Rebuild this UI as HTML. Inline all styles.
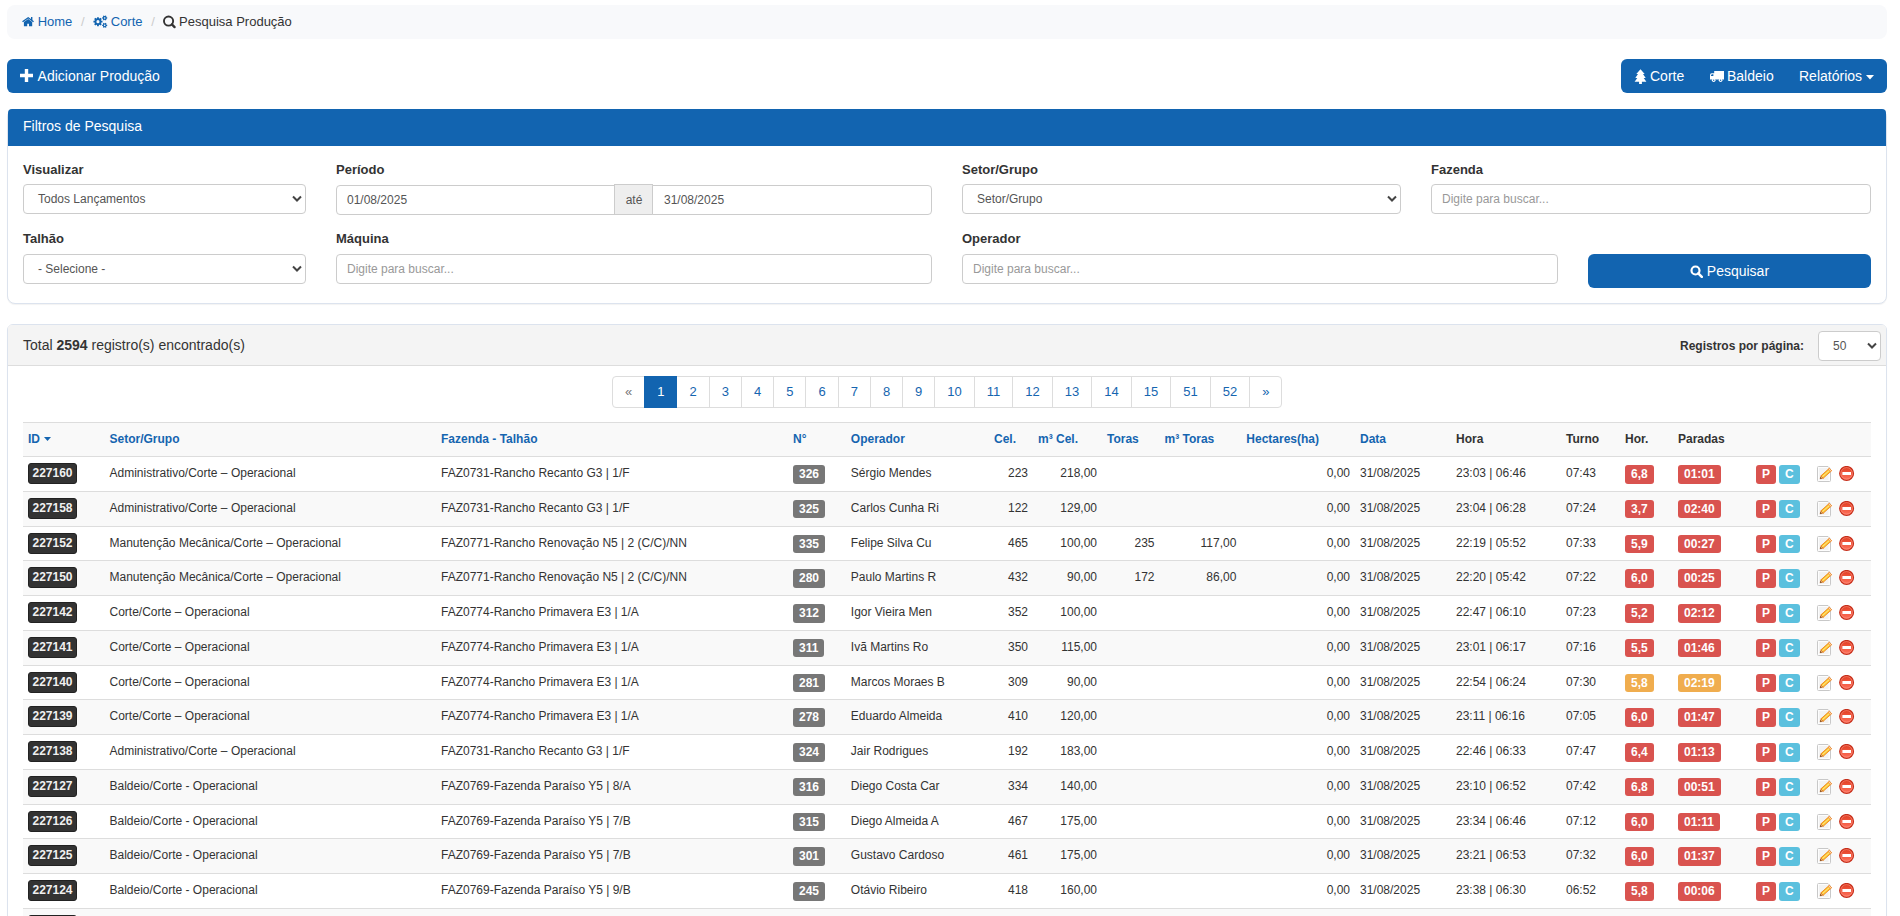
<!DOCTYPE html>
<html><head><meta charset="utf-8">
<style>
*{box-sizing:border-box}
html,body{margin:0;padding:0;background:#fff;width:1900px;height:916px;overflow:hidden}
body{font-family:"Liberation Sans",sans-serif;color:#333;font-size:13px;position:relative}
.abs{position:absolute}
.blue{background:#1264b0}
.bc{left:7px;top:5px;width:1880px;height:34px;background:#f8f9fb;border-radius:8px;font-size:13px;line-height:18px;padding:7px 15px;white-space:nowrap}
.bc a{color:#1264b0;text-decoration:none}
.bc .sep{color:#ccc;padding:0 5px}
.ico{display:inline-block;vertical-align:baseline}
.btn{color:#fff;font-size:14px;line-height:20px;border-radius:6px;white-space:nowrap}
.panel{border:1px solid #dce3ee;border-radius:8px;background:#fff;box-shadow:0 1px 1px rgba(0,0,0,.05)}
.ph1{left:0;top:-1px;right:0;height:37px;border-radius:4px 4px 0 0;color:#fff;font-size:14px;padding:0 15px;line-height:35px}
label{position:absolute;font-weight:bold;font-size:13px;line-height:18px;color:#333}
.fc{position:absolute;height:30px;border:1px solid #ccc;border-radius:4px;background:#fff;font-size:12px;line-height:28px;color:#555;padding:0 10px;white-space:nowrap}
.ph{color:#999}
.chev{position:absolute;right:3px;top:10px}
.pag{display:flex;height:31.5px;font-size:13px}
.pi{display:block;height:31.5px;line-height:29.5px;padding:0 12px;border:1px solid #ddd;margin-left:-1px;color:#1565b0;background:#fff}
.pi.first{margin-left:0;border-radius:4px 0 0 4px}
.pi.last{border-radius:0 4px 4px 0}
.pi.dis{color:#777}
.pi.act{background:#1264b0;border-color:#1264b0;color:#fff;position:relative}
.tbl{font-size:12px}
.thr{position:relative;height:35px;background:#f9f9f9;border-top:1px solid #ddd;border-bottom:1px solid #ddd}
.th{position:absolute;top:7px;line-height:18px;font-weight:bold;color:#333;white-space:nowrap}
.th.lk{color:#1565b0}
.tr{position:relative;height:34.75px;border-bottom:1px solid #ddd;background:#fff}
.tr.st{background:#f9f9f9}
.td{position:absolute;top:7px;line-height:18px;white-space:nowrap;color:#333}
.lb{position:absolute;top:8px;height:18.5px;line-height:18.5px;font-size:12px;font-weight:bold;color:#fff;border-radius:3px;padding:0 6px;white-space:nowrap}
.lid{top:6px;height:21px;line-height:19.5px;background:#333;border:1px solid #222;padding:0 3.5px;border-radius:3px;color:#f0f0f0}
.lnum{background:#777}
.lr{background:#d9534f}
.lo{background:#f0ad4e}
.li{background:#5bc0de}
.icn{position:absolute;top:9px;line-height:0}
</style></head><body>

<!-- breadcrumb -->
<div class="abs bc">
<a href="#"><svg class="ico" width="12.07" height="16" viewBox="0 0 12.07 16" style="vertical-align:-2px;overflow:visible"><path d="M0.1 9.3 L6.2 4.9 L12 9.3 L11.1 10.2 L6.2 6.6 L1 10.2 Z" fill="#1264b0"/><rect x="9" y="5" width="1.4" height="3.2" fill="#1264b0"/><path d="M1.9 10 L6.2 7 L10.2 10 V14.16 H7 V11.8 H5.2 V14.16 H1.9 Z" fill="#1264b0"/></svg> Home</a> <span class="sep">/&nbsp;</span><a href="#"><svg class="ico" width="13.93" height="16" viewBox="0 0 13.93 16" style="vertical-align:-2px;overflow:visible"><path fill-rule="evenodd" fill="#1264b0" d="M8.32 8.70 L9.48 8.82 L9.48 10.50 L8.32 10.62 L8.02 11.36 L8.75 12.26 L7.56 13.45 L6.66 12.72 L5.92 13.02 L5.80 14.18 L4.12 14.18 L4.00 13.02 L3.26 12.72 L2.36 13.45 L1.17 12.26 L1.90 11.36 L1.60 10.62 L0.44 10.50 L0.44 8.82 L1.60 8.70 L1.90 7.96 L1.17 7.06 L2.36 5.87 L3.26 6.60 L4.00 6.30 L4.12 5.14 L5.80 5.14 L5.92 6.30 L6.66 6.60 L7.56 5.87 L8.75 7.06 L8.02 7.96 Z M6.51 9.66 A1.55 1.55 0 1 0 3.41 9.66 A1.55 1.55 0 1 0 6.51 9.66 Z M13.47 5.27 L14.22 5.33 L14.22 6.59 L13.47 6.65 L13.18 7.15 L13.51 7.83 L12.41 8.46 L11.99 7.84 L11.41 7.84 L10.99 8.46 L9.89 7.83 L10.22 7.15 L9.93 6.65 L9.18 6.59 L9.18 5.33 L9.93 5.27 L10.22 4.77 L9.89 4.09 L10.99 3.46 L11.41 4.08 L11.99 4.08 L12.41 3.46 L13.51 4.09 L13.18 4.77 Z M12.50 5.96 A0.8 0.8 0 1 0 10.90 5.96 A0.8 0.8 0 1 0 12.50 5.96 Z M13.47 12.67 L14.22 12.73 L14.22 13.99 L13.47 14.05 L13.18 14.55 L13.51 15.23 L12.41 15.86 L11.99 15.24 L11.41 15.24 L10.99 15.86 L9.89 15.23 L10.22 14.55 L9.93 14.05 L9.18 13.99 L9.18 12.73 L9.93 12.67 L10.22 12.17 L9.89 11.49 L10.99 10.86 L11.41 11.48 L11.99 11.48 L12.41 10.86 L13.51 11.49 L13.18 12.17 Z M12.50 13.36 A0.8 0.8 0 1 0 10.90 13.36 A0.8 0.8 0 1 0 12.50 13.36 Z"/></svg> Corte</a> <span class="sep">/&nbsp;</span><svg class="ico" width="12.07" height="16" viewBox="0 0 12.07 16" style="vertical-align:-2px;overflow:visible"><circle cx="5.56" cy="9.06" r="4.6" fill="none" stroke="#333" stroke-width="1.9"/><path d="M8.9 12.4 L11.6 15.1" stroke="#333" stroke-width="2.3" stroke-linecap="round"/></svg> Pesquisa Produção
</div>

<!-- buttons -->
<div class="abs btn blue" style="left:7px;top:59px;width:165px;height:34px;padding:7px 0 0 13px">
<svg class="ico" width="13" height="13" viewBox="0 0 13 13" style="vertical-align:-1px;margin-right:1.5px"><path d="M4.8 0 H8.2 V4.8 H13 V8.2 H8.2 V13 H4.8 V8.2 H0 V4.8 H4.8 Z" fill="#fff"/></svg> Adicionar Produção</div>

<div class="abs btn blue" style="left:1621px;top:59px;width:266px;height:34px">
<svg class="abs" style="left:13px;top:10px" width="13" height="16" viewBox="0 0 13 16"><path d="M6.5 0.3 L10.7 5 H9 L11.7 8.9 H9.7 L12.4 12.8 H7.9 V14.9 H5.1 V12.8 H0.6 L3.3 8.9 H1.3 L4 5 H2.3 Z" fill="#fff"/></svg>
<span class="abs" style="left:29px;top:7px">Corte</span>
<svg class="abs" style="left:89px;top:12px" width="15" height="12" viewBox="0 0 15 12"><path d="M4.2 0 H14 V8.6 H4.2 Z M0 4.2 Q0 2.3 1.6 2.3 H4.4 V8.6 H0 Z" fill="#fff"/><path d="M0.9 5 Q0.9 3.2 2.2 3.2 H3.4 V5 Z" fill="#1264b0"/><circle cx="3.7" cy="9.3" r="1.8" fill="#fff"/><circle cx="10.6" cy="9.3" r="1.8" fill="#fff"/><circle cx="3.7" cy="9.3" r="0.7" fill="#1264b0"/><circle cx="10.6" cy="9.3" r="0.7" fill="#1264b0"/></svg>
<span class="abs" style="left:106px;top:7px">Baldeio</span>
<span class="abs" style="left:178px;top:7px">Relatórios <svg class="ico" width="8" height="5" viewBox="0 0 8 5" style="vertical-align:1px"><path d="M0 0 H8 L4 4.5 Z" fill="#fff"/></svg></span>
</div>

<!-- filter panel -->
<div class="abs panel" style="left:7px;top:109px;width:1880px;height:195px">
 <div class="abs ph1 blue">Filtros de Pesquisa</div>
 <label style="left:15px;top:51px">Visualizar</label>
 <div class="fc" style="left:15px;top:74px;width:283px;padding-left:14px">Todos Lançamentos<svg class="chev" width="10" height="8" viewBox="0 0 10 8"><path d="M1 1.5 L5 5.5 L9 1.5" fill="none" stroke="#444" stroke-width="2"/></svg></div>
 <label style="left:328px;top:51px">Período</label>
 <div class="fc" style="left:328px;top:75px;width:279px;border-radius:4px 0 0 4px">01/08/2025</div>
 <div class="fc" style="left:606px;top:74px;width:39px;height:31px;background:#eee;border-radius:0;padding:0 0 0 1px;text-align:center;line-height:30px">até</div>
 <div class="fc" style="left:644px;top:75px;width:280px;border-radius:0 4px 4px 0;padding-left:11px">31/08/2025</div>
 <label style="left:954px;top:51px">Setor/Grupo</label>
 <div class="fc" style="left:954px;top:74px;width:439px;padding-left:14px">Setor/Grupo<svg class="chev" width="10" height="8" viewBox="0 0 10 8"><path d="M1 1.5 L5 5.5 L9 1.5" fill="none" stroke="#444" stroke-width="2"/></svg></div>
 <label style="left:1423px;top:51px">Fazenda</label>
 <div class="fc ph" style="left:1423px;top:74px;width:440px">Digite para buscar...</div>

 <label style="left:15px;top:120px">Talhão</label>
 <div class="fc" style="left:15px;top:144px;width:283px;padding-left:14px">- Selecione -<svg class="chev" width="10" height="8" viewBox="0 0 10 8"><path d="M1 1.5 L5 5.5 L9 1.5" fill="none" stroke="#444" stroke-width="2"/></svg></div>
 <label style="left:328px;top:120px">Máquina</label>
 <div class="fc ph" style="left:328px;top:144px;width:596px">Digite para buscar...</div>
 <label style="left:954px;top:120px">Operador</label>
 <div class="fc ph" style="left:954px;top:144px;width:596px">Digite para buscar...</div>
 <div class="abs btn blue" style="left:1580px;top:144px;width:283px;height:34px;text-align:center;line-height:34px"><svg class="ico" width="13" height="13" viewBox="0 0 13 13" style="vertical-align:-2px"><circle cx="5.5" cy="5.5" r="4" fill="none" stroke="#fff" stroke-width="2.2"/><path d="M8.3 8.3 L11.8 11.8" stroke="#fff" stroke-width="2.6" stroke-linecap="round"/></svg> Pesquisar</div>
</div>

<!-- results panel -->
<div class="abs panel" id="p2" style="left:7px;top:324px;width:1880px;height:700px;border-radius:6px">
 <div class="abs" style="left:0;top:0;right:0;height:41px;background:#f4f4f4;border-bottom:1px solid #ddd;border-radius:4px 4px 0 0"></div>
 <div class="abs" style="left:15px;top:10px;font-size:14px;line-height:20px">Total <b>2594</b> registro(s) encontrado(s)</div>
 <div class="abs" style="left:1672px;top:12px;font-size:12px;line-height:18px;font-weight:bold">Registros por página:</div>
 <div class="fc" style="left:1810px;top:6px;width:63px;height:29.5px;font-size:12px;padding-left:14px;line-height:29px">50<svg class="chev" width="10" height="8" viewBox="0 0 10 8" style="top:10px"><path d="M1 1.5 L5 5.5 L9 1.5" fill="none" stroke="#444" stroke-width="2"/></svg></div>
<!--TABLE-->
<div class="pag abs" style="left:604px;top:51px">
<span class="pi first dis">«</span>
<span class="pi act">1</span>
<span class="pi">2</span>
<span class="pi">3</span>
<span class="pi">4</span>
<span class="pi">5</span>
<span class="pi">6</span>
<span class="pi">7</span>
<span class="pi">8</span>
<span class="pi">9</span>
<span class="pi">10</span>
<span class="pi">11</span>
<span class="pi">12</span>
<span class="pi">13</span>
<span class="pi">14</span>
<span class="pi">15</span>
<span class="pi">51</span>
<span class="pi">52</span>
<span class="pi last">»</span>
</div>
<div class="tbl abs" style="left:15px;top:97px;width:1848px">
<div class="thr">
<span class="th lk" style="left:5.0px">ID<svg width="7" height="4" viewBox="0 0 7 4" style="margin-left:4px;vertical-align:2px"><path d="M0 0 H7 L3.5 4 Z" fill="#1565b0"/></svg></span>
<span class="th lk" style="left:86.5px">Setor/Grupo</span>
<span class="th lk" style="left:418.0px">Fazenda - Talhão</span>
<span class="th lk" style="left:770.0px">N°</span>
<span class="th lk" style="left:827.8px">Operador</span>
<span class="th lk" style="left:971.0px">Cel.</span>
<span class="th lk" style="left:1015.0px">m³ Cel.</span>
<span class="th lk" style="left:1084.0px">Toras</span>
<span class="th lk" style="left:1141.5px">m³ Toras</span>
<span class="th lk" style="left:1223.3px">Hectares(ha)</span>
<span class="th lk" style="left:1337.0px">Data</span>
<span class="th" style="left:1433.0px">Hora</span>
<span class="th" style="left:1543.0px">Turno</span>
<span class="th" style="left:1602.0px">Hor.</span>
<span class="th" style="left:1655.0px">Paradas</span>
</div>
<div class="tr">
<span class="lb lid" style="left:5px">227160</span>
<span class="td" style="left:86.5px">Administrativo/Corte – Operacional</span>
<span class="td" style="left:418.0px">FAZ0731-Rancho Recanto G3 | 1/F</span>
<span class="lb lnum" style="left:770.0px">326</span>
<span class="td" style="left:827.8px">Sérgio Mendes</span>
<span class="td tr_" style="right:843.0px">223</span>
<span class="td tr_" style="right:774.0px">218,00</span>
<span class="td tr_" style="right:521.0px">0,00</span>
<span class="td" style="left:1337.0px">31/08/2025</span>
<span class="td" style="left:1433.0px">23:03 | 06:46</span>
<span class="td" style="left:1543.0px">07:43</span>
<span class="lb lr" style="left:1602.0px">6,8</span>
<span class="lb lr" style="left:1655.0px">01:01</span>
<span class="lb lr" style="left:1733.0px">P</span>
<span class="lb li" style="left:1756.0px">C</span>
<span class="icn" style="left:1794.0px"><svg class="ied" width="18" height="17" viewBox="0 0 18 17"><path d="M0.5 1.5 Q0.5 0.5 1.5 0.5 H11 L13.5 3 V14.5 Q13.5 15.5 12.5 15.5 H1.5 Q0.5 15.5 0.5 14.5 Z" fill="#fdfdfd" stroke="#c8c8c8"/><rect x="2" y="2" width="9.5" height="12" fill="#f3f3f3"/><path d="M6.14 12.30 L3.94 9.84 L12.3 2.37 L14.5 4.83 Z" fill="#fcc52c" stroke="#ec7a14" stroke-width="0.8" stroke-linejoin="round"/><path d="M5.3 10.8 L12.6 4.2" stroke="#fff3b0" stroke-width="0.8"/><path d="M12.3 2.37 L14.5 4.83 L13.46 5.76 L11.26 3.30 Z" fill="#fbe0c8" stroke="#ec7a14" stroke-width="0.6"/><path d="M3.94 9.84 L6.14 12.30 L3.1 12.8 Z" fill="#f6c27a" stroke="#d0600a" stroke-width="0.5" stroke-linejoin="round"/><path d="M3.1 12.8 L3.6 11.1 L4.8 12.4 Z" fill="#4a2005"/></svg></span>
<span class="icn" style="left:1815.5px"><svg class="idl" width="16" height="16" viewBox="0 0 16 16"><defs><linearGradient id="rg" x1="0" y1="0" x2="0" y2="1"><stop offset="0" stop-color="#e03c20"/><stop offset="1" stop-color="#ff735e"/></linearGradient></defs><circle cx="7.6" cy="7.4" r="6.9" fill="url(#rg)" stroke="#c62e1a" stroke-width="1.2"/><circle cx="7.6" cy="7.4" r="5.8" fill="none" stroke="#ffb0a0" stroke-width="0.6" opacity="0.7"/><rect x="3.4" y="6.0" width="8.6" height="3" fill="#fff"/></svg></span>
</div>
<div class="tr st">
<span class="lb lid" style="left:5px">227158</span>
<span class="td" style="left:86.5px">Administrativo/Corte – Operacional</span>
<span class="td" style="left:418.0px">FAZ0731-Rancho Recanto G3 | 1/F</span>
<span class="lb lnum" style="left:770.0px">325</span>
<span class="td" style="left:827.8px">Carlos Cunha Ri</span>
<span class="td tr_" style="right:843.0px">122</span>
<span class="td tr_" style="right:774.0px">129,00</span>
<span class="td tr_" style="right:521.0px">0,00</span>
<span class="td" style="left:1337.0px">31/08/2025</span>
<span class="td" style="left:1433.0px">23:04 | 06:28</span>
<span class="td" style="left:1543.0px">07:24</span>
<span class="lb lr" style="left:1602.0px">3,7</span>
<span class="lb lr" style="left:1655.0px">02:40</span>
<span class="lb lr" style="left:1733.0px">P</span>
<span class="lb li" style="left:1756.0px">C</span>
<span class="icn" style="left:1794.0px"><svg class="ied" width="18" height="17" viewBox="0 0 18 17"><path d="M0.5 1.5 Q0.5 0.5 1.5 0.5 H11 L13.5 3 V14.5 Q13.5 15.5 12.5 15.5 H1.5 Q0.5 15.5 0.5 14.5 Z" fill="#fdfdfd" stroke="#c8c8c8"/><rect x="2" y="2" width="9.5" height="12" fill="#f3f3f3"/><path d="M6.14 12.30 L3.94 9.84 L12.3 2.37 L14.5 4.83 Z" fill="#fcc52c" stroke="#ec7a14" stroke-width="0.8" stroke-linejoin="round"/><path d="M5.3 10.8 L12.6 4.2" stroke="#fff3b0" stroke-width="0.8"/><path d="M12.3 2.37 L14.5 4.83 L13.46 5.76 L11.26 3.30 Z" fill="#fbe0c8" stroke="#ec7a14" stroke-width="0.6"/><path d="M3.94 9.84 L6.14 12.30 L3.1 12.8 Z" fill="#f6c27a" stroke="#d0600a" stroke-width="0.5" stroke-linejoin="round"/><path d="M3.1 12.8 L3.6 11.1 L4.8 12.4 Z" fill="#4a2005"/></svg></span>
<span class="icn" style="left:1815.5px"><svg class="idl" width="16" height="16" viewBox="0 0 16 16"><defs><linearGradient id="rg" x1="0" y1="0" x2="0" y2="1"><stop offset="0" stop-color="#e03c20"/><stop offset="1" stop-color="#ff735e"/></linearGradient></defs><circle cx="7.6" cy="7.4" r="6.9" fill="url(#rg)" stroke="#c62e1a" stroke-width="1.2"/><circle cx="7.6" cy="7.4" r="5.8" fill="none" stroke="#ffb0a0" stroke-width="0.6" opacity="0.7"/><rect x="3.4" y="6.0" width="8.6" height="3" fill="#fff"/></svg></span>
</div>
<div class="tr">
<span class="lb lid" style="left:5px">227152</span>
<span class="td" style="left:86.5px">Manutenção Mecânica/Corte – Operacional</span>
<span class="td" style="left:418.0px">FAZ0771-Rancho Renovação N5 | 2 (C/C)/NN</span>
<span class="lb lnum" style="left:770.0px">335</span>
<span class="td" style="left:827.8px">Felipe Silva Cu</span>
<span class="td tr_" style="right:843.0px">465</span>
<span class="td tr_" style="right:774.0px">100,00</span>
<span class="td tr_" style="right:716.5px">235</span>
<span class="td tr_" style="right:634.7px">117,00</span>
<span class="td tr_" style="right:521.0px">0,00</span>
<span class="td" style="left:1337.0px">31/08/2025</span>
<span class="td" style="left:1433.0px">22:19 | 05:52</span>
<span class="td" style="left:1543.0px">07:33</span>
<span class="lb lr" style="left:1602.0px">5,9</span>
<span class="lb lr" style="left:1655.0px">00:27</span>
<span class="lb lr" style="left:1733.0px">P</span>
<span class="lb li" style="left:1756.0px">C</span>
<span class="icn" style="left:1794.0px"><svg class="ied" width="18" height="17" viewBox="0 0 18 17"><path d="M0.5 1.5 Q0.5 0.5 1.5 0.5 H11 L13.5 3 V14.5 Q13.5 15.5 12.5 15.5 H1.5 Q0.5 15.5 0.5 14.5 Z" fill="#fdfdfd" stroke="#c8c8c8"/><rect x="2" y="2" width="9.5" height="12" fill="#f3f3f3"/><path d="M6.14 12.30 L3.94 9.84 L12.3 2.37 L14.5 4.83 Z" fill="#fcc52c" stroke="#ec7a14" stroke-width="0.8" stroke-linejoin="round"/><path d="M5.3 10.8 L12.6 4.2" stroke="#fff3b0" stroke-width="0.8"/><path d="M12.3 2.37 L14.5 4.83 L13.46 5.76 L11.26 3.30 Z" fill="#fbe0c8" stroke="#ec7a14" stroke-width="0.6"/><path d="M3.94 9.84 L6.14 12.30 L3.1 12.8 Z" fill="#f6c27a" stroke="#d0600a" stroke-width="0.5" stroke-linejoin="round"/><path d="M3.1 12.8 L3.6 11.1 L4.8 12.4 Z" fill="#4a2005"/></svg></span>
<span class="icn" style="left:1815.5px"><svg class="idl" width="16" height="16" viewBox="0 0 16 16"><defs><linearGradient id="rg" x1="0" y1="0" x2="0" y2="1"><stop offset="0" stop-color="#e03c20"/><stop offset="1" stop-color="#ff735e"/></linearGradient></defs><circle cx="7.6" cy="7.4" r="6.9" fill="url(#rg)" stroke="#c62e1a" stroke-width="1.2"/><circle cx="7.6" cy="7.4" r="5.8" fill="none" stroke="#ffb0a0" stroke-width="0.6" opacity="0.7"/><rect x="3.4" y="6.0" width="8.6" height="3" fill="#fff"/></svg></span>
</div>
<div class="tr st">
<span class="lb lid" style="left:5px">227150</span>
<span class="td" style="left:86.5px">Manutenção Mecânica/Corte – Operacional</span>
<span class="td" style="left:418.0px">FAZ0771-Rancho Renovação N5 | 2 (C/C)/NN</span>
<span class="lb lnum" style="left:770.0px">280</span>
<span class="td" style="left:827.8px">Paulo Martins R</span>
<span class="td tr_" style="right:843.0px">432</span>
<span class="td tr_" style="right:774.0px">90,00</span>
<span class="td tr_" style="right:716.5px">172</span>
<span class="td tr_" style="right:634.7px">86,00</span>
<span class="td tr_" style="right:521.0px">0,00</span>
<span class="td" style="left:1337.0px">31/08/2025</span>
<span class="td" style="left:1433.0px">22:20 | 05:42</span>
<span class="td" style="left:1543.0px">07:22</span>
<span class="lb lr" style="left:1602.0px">6,0</span>
<span class="lb lr" style="left:1655.0px">00:25</span>
<span class="lb lr" style="left:1733.0px">P</span>
<span class="lb li" style="left:1756.0px">C</span>
<span class="icn" style="left:1794.0px"><svg class="ied" width="18" height="17" viewBox="0 0 18 17"><path d="M0.5 1.5 Q0.5 0.5 1.5 0.5 H11 L13.5 3 V14.5 Q13.5 15.5 12.5 15.5 H1.5 Q0.5 15.5 0.5 14.5 Z" fill="#fdfdfd" stroke="#c8c8c8"/><rect x="2" y="2" width="9.5" height="12" fill="#f3f3f3"/><path d="M6.14 12.30 L3.94 9.84 L12.3 2.37 L14.5 4.83 Z" fill="#fcc52c" stroke="#ec7a14" stroke-width="0.8" stroke-linejoin="round"/><path d="M5.3 10.8 L12.6 4.2" stroke="#fff3b0" stroke-width="0.8"/><path d="M12.3 2.37 L14.5 4.83 L13.46 5.76 L11.26 3.30 Z" fill="#fbe0c8" stroke="#ec7a14" stroke-width="0.6"/><path d="M3.94 9.84 L6.14 12.30 L3.1 12.8 Z" fill="#f6c27a" stroke="#d0600a" stroke-width="0.5" stroke-linejoin="round"/><path d="M3.1 12.8 L3.6 11.1 L4.8 12.4 Z" fill="#4a2005"/></svg></span>
<span class="icn" style="left:1815.5px"><svg class="idl" width="16" height="16" viewBox="0 0 16 16"><defs><linearGradient id="rg" x1="0" y1="0" x2="0" y2="1"><stop offset="0" stop-color="#e03c20"/><stop offset="1" stop-color="#ff735e"/></linearGradient></defs><circle cx="7.6" cy="7.4" r="6.9" fill="url(#rg)" stroke="#c62e1a" stroke-width="1.2"/><circle cx="7.6" cy="7.4" r="5.8" fill="none" stroke="#ffb0a0" stroke-width="0.6" opacity="0.7"/><rect x="3.4" y="6.0" width="8.6" height="3" fill="#fff"/></svg></span>
</div>
<div class="tr">
<span class="lb lid" style="left:5px">227142</span>
<span class="td" style="left:86.5px">Corte/Corte – Operacional</span>
<span class="td" style="left:418.0px">FAZ0774-Rancho Primavera E3 | 1/A</span>
<span class="lb lnum" style="left:770.0px">312</span>
<span class="td" style="left:827.8px">Igor Vieira Men</span>
<span class="td tr_" style="right:843.0px">352</span>
<span class="td tr_" style="right:774.0px">100,00</span>
<span class="td tr_" style="right:521.0px">0,00</span>
<span class="td" style="left:1337.0px">31/08/2025</span>
<span class="td" style="left:1433.0px">22:47 | 06:10</span>
<span class="td" style="left:1543.0px">07:23</span>
<span class="lb lr" style="left:1602.0px">5,2</span>
<span class="lb lr" style="left:1655.0px">02:12</span>
<span class="lb lr" style="left:1733.0px">P</span>
<span class="lb li" style="left:1756.0px">C</span>
<span class="icn" style="left:1794.0px"><svg class="ied" width="18" height="17" viewBox="0 0 18 17"><path d="M0.5 1.5 Q0.5 0.5 1.5 0.5 H11 L13.5 3 V14.5 Q13.5 15.5 12.5 15.5 H1.5 Q0.5 15.5 0.5 14.5 Z" fill="#fdfdfd" stroke="#c8c8c8"/><rect x="2" y="2" width="9.5" height="12" fill="#f3f3f3"/><path d="M6.14 12.30 L3.94 9.84 L12.3 2.37 L14.5 4.83 Z" fill="#fcc52c" stroke="#ec7a14" stroke-width="0.8" stroke-linejoin="round"/><path d="M5.3 10.8 L12.6 4.2" stroke="#fff3b0" stroke-width="0.8"/><path d="M12.3 2.37 L14.5 4.83 L13.46 5.76 L11.26 3.30 Z" fill="#fbe0c8" stroke="#ec7a14" stroke-width="0.6"/><path d="M3.94 9.84 L6.14 12.30 L3.1 12.8 Z" fill="#f6c27a" stroke="#d0600a" stroke-width="0.5" stroke-linejoin="round"/><path d="M3.1 12.8 L3.6 11.1 L4.8 12.4 Z" fill="#4a2005"/></svg></span>
<span class="icn" style="left:1815.5px"><svg class="idl" width="16" height="16" viewBox="0 0 16 16"><defs><linearGradient id="rg" x1="0" y1="0" x2="0" y2="1"><stop offset="0" stop-color="#e03c20"/><stop offset="1" stop-color="#ff735e"/></linearGradient></defs><circle cx="7.6" cy="7.4" r="6.9" fill="url(#rg)" stroke="#c62e1a" stroke-width="1.2"/><circle cx="7.6" cy="7.4" r="5.8" fill="none" stroke="#ffb0a0" stroke-width="0.6" opacity="0.7"/><rect x="3.4" y="6.0" width="8.6" height="3" fill="#fff"/></svg></span>
</div>
<div class="tr st">
<span class="lb lid" style="left:5px">227141</span>
<span class="td" style="left:86.5px">Corte/Corte – Operacional</span>
<span class="td" style="left:418.0px">FAZ0774-Rancho Primavera E3 | 1/A</span>
<span class="lb lnum" style="left:770.0px">311</span>
<span class="td" style="left:827.8px">Ivã Martins Ro</span>
<span class="td tr_" style="right:843.0px">350</span>
<span class="td tr_" style="right:774.0px">115,00</span>
<span class="td tr_" style="right:521.0px">0,00</span>
<span class="td" style="left:1337.0px">31/08/2025</span>
<span class="td" style="left:1433.0px">23:01 | 06:17</span>
<span class="td" style="left:1543.0px">07:16</span>
<span class="lb lr" style="left:1602.0px">5,5</span>
<span class="lb lr" style="left:1655.0px">01:46</span>
<span class="lb lr" style="left:1733.0px">P</span>
<span class="lb li" style="left:1756.0px">C</span>
<span class="icn" style="left:1794.0px"><svg class="ied" width="18" height="17" viewBox="0 0 18 17"><path d="M0.5 1.5 Q0.5 0.5 1.5 0.5 H11 L13.5 3 V14.5 Q13.5 15.5 12.5 15.5 H1.5 Q0.5 15.5 0.5 14.5 Z" fill="#fdfdfd" stroke="#c8c8c8"/><rect x="2" y="2" width="9.5" height="12" fill="#f3f3f3"/><path d="M6.14 12.30 L3.94 9.84 L12.3 2.37 L14.5 4.83 Z" fill="#fcc52c" stroke="#ec7a14" stroke-width="0.8" stroke-linejoin="round"/><path d="M5.3 10.8 L12.6 4.2" stroke="#fff3b0" stroke-width="0.8"/><path d="M12.3 2.37 L14.5 4.83 L13.46 5.76 L11.26 3.30 Z" fill="#fbe0c8" stroke="#ec7a14" stroke-width="0.6"/><path d="M3.94 9.84 L6.14 12.30 L3.1 12.8 Z" fill="#f6c27a" stroke="#d0600a" stroke-width="0.5" stroke-linejoin="round"/><path d="M3.1 12.8 L3.6 11.1 L4.8 12.4 Z" fill="#4a2005"/></svg></span>
<span class="icn" style="left:1815.5px"><svg class="idl" width="16" height="16" viewBox="0 0 16 16"><defs><linearGradient id="rg" x1="0" y1="0" x2="0" y2="1"><stop offset="0" stop-color="#e03c20"/><stop offset="1" stop-color="#ff735e"/></linearGradient></defs><circle cx="7.6" cy="7.4" r="6.9" fill="url(#rg)" stroke="#c62e1a" stroke-width="1.2"/><circle cx="7.6" cy="7.4" r="5.8" fill="none" stroke="#ffb0a0" stroke-width="0.6" opacity="0.7"/><rect x="3.4" y="6.0" width="8.6" height="3" fill="#fff"/></svg></span>
</div>
<div class="tr">
<span class="lb lid" style="left:5px">227140</span>
<span class="td" style="left:86.5px">Corte/Corte – Operacional</span>
<span class="td" style="left:418.0px">FAZ0774-Rancho Primavera E3 | 1/A</span>
<span class="lb lnum" style="left:770.0px">281</span>
<span class="td" style="left:827.8px">Marcos Moraes B</span>
<span class="td tr_" style="right:843.0px">309</span>
<span class="td tr_" style="right:774.0px">90,00</span>
<span class="td tr_" style="right:521.0px">0,00</span>
<span class="td" style="left:1337.0px">31/08/2025</span>
<span class="td" style="left:1433.0px">22:54 | 06:24</span>
<span class="td" style="left:1543.0px">07:30</span>
<span class="lb lo" style="left:1602.0px">5,8</span>
<span class="lb lo" style="left:1655.0px">02:19</span>
<span class="lb lr" style="left:1733.0px">P</span>
<span class="lb li" style="left:1756.0px">C</span>
<span class="icn" style="left:1794.0px"><svg class="ied" width="18" height="17" viewBox="0 0 18 17"><path d="M0.5 1.5 Q0.5 0.5 1.5 0.5 H11 L13.5 3 V14.5 Q13.5 15.5 12.5 15.5 H1.5 Q0.5 15.5 0.5 14.5 Z" fill="#fdfdfd" stroke="#c8c8c8"/><rect x="2" y="2" width="9.5" height="12" fill="#f3f3f3"/><path d="M6.14 12.30 L3.94 9.84 L12.3 2.37 L14.5 4.83 Z" fill="#fcc52c" stroke="#ec7a14" stroke-width="0.8" stroke-linejoin="round"/><path d="M5.3 10.8 L12.6 4.2" stroke="#fff3b0" stroke-width="0.8"/><path d="M12.3 2.37 L14.5 4.83 L13.46 5.76 L11.26 3.30 Z" fill="#fbe0c8" stroke="#ec7a14" stroke-width="0.6"/><path d="M3.94 9.84 L6.14 12.30 L3.1 12.8 Z" fill="#f6c27a" stroke="#d0600a" stroke-width="0.5" stroke-linejoin="round"/><path d="M3.1 12.8 L3.6 11.1 L4.8 12.4 Z" fill="#4a2005"/></svg></span>
<span class="icn" style="left:1815.5px"><svg class="idl" width="16" height="16" viewBox="0 0 16 16"><defs><linearGradient id="rg" x1="0" y1="0" x2="0" y2="1"><stop offset="0" stop-color="#e03c20"/><stop offset="1" stop-color="#ff735e"/></linearGradient></defs><circle cx="7.6" cy="7.4" r="6.9" fill="url(#rg)" stroke="#c62e1a" stroke-width="1.2"/><circle cx="7.6" cy="7.4" r="5.8" fill="none" stroke="#ffb0a0" stroke-width="0.6" opacity="0.7"/><rect x="3.4" y="6.0" width="8.6" height="3" fill="#fff"/></svg></span>
</div>
<div class="tr st">
<span class="lb lid" style="left:5px">227139</span>
<span class="td" style="left:86.5px">Corte/Corte – Operacional</span>
<span class="td" style="left:418.0px">FAZ0774-Rancho Primavera E3 | 1/A</span>
<span class="lb lnum" style="left:770.0px">278</span>
<span class="td" style="left:827.8px">Eduardo Almeida</span>
<span class="td tr_" style="right:843.0px">410</span>
<span class="td tr_" style="right:774.0px">120,00</span>
<span class="td tr_" style="right:521.0px">0,00</span>
<span class="td" style="left:1337.0px">31/08/2025</span>
<span class="td" style="left:1433.0px">23:11 | 06:16</span>
<span class="td" style="left:1543.0px">07:05</span>
<span class="lb lr" style="left:1602.0px">6,0</span>
<span class="lb lr" style="left:1655.0px">01:47</span>
<span class="lb lr" style="left:1733.0px">P</span>
<span class="lb li" style="left:1756.0px">C</span>
<span class="icn" style="left:1794.0px"><svg class="ied" width="18" height="17" viewBox="0 0 18 17"><path d="M0.5 1.5 Q0.5 0.5 1.5 0.5 H11 L13.5 3 V14.5 Q13.5 15.5 12.5 15.5 H1.5 Q0.5 15.5 0.5 14.5 Z" fill="#fdfdfd" stroke="#c8c8c8"/><rect x="2" y="2" width="9.5" height="12" fill="#f3f3f3"/><path d="M6.14 12.30 L3.94 9.84 L12.3 2.37 L14.5 4.83 Z" fill="#fcc52c" stroke="#ec7a14" stroke-width="0.8" stroke-linejoin="round"/><path d="M5.3 10.8 L12.6 4.2" stroke="#fff3b0" stroke-width="0.8"/><path d="M12.3 2.37 L14.5 4.83 L13.46 5.76 L11.26 3.30 Z" fill="#fbe0c8" stroke="#ec7a14" stroke-width="0.6"/><path d="M3.94 9.84 L6.14 12.30 L3.1 12.8 Z" fill="#f6c27a" stroke="#d0600a" stroke-width="0.5" stroke-linejoin="round"/><path d="M3.1 12.8 L3.6 11.1 L4.8 12.4 Z" fill="#4a2005"/></svg></span>
<span class="icn" style="left:1815.5px"><svg class="idl" width="16" height="16" viewBox="0 0 16 16"><defs><linearGradient id="rg" x1="0" y1="0" x2="0" y2="1"><stop offset="0" stop-color="#e03c20"/><stop offset="1" stop-color="#ff735e"/></linearGradient></defs><circle cx="7.6" cy="7.4" r="6.9" fill="url(#rg)" stroke="#c62e1a" stroke-width="1.2"/><circle cx="7.6" cy="7.4" r="5.8" fill="none" stroke="#ffb0a0" stroke-width="0.6" opacity="0.7"/><rect x="3.4" y="6.0" width="8.6" height="3" fill="#fff"/></svg></span>
</div>
<div class="tr">
<span class="lb lid" style="left:5px">227138</span>
<span class="td" style="left:86.5px">Administrativo/Corte – Operacional</span>
<span class="td" style="left:418.0px">FAZ0731-Rancho Recanto G3 | 1/F</span>
<span class="lb lnum" style="left:770.0px">324</span>
<span class="td" style="left:827.8px">Jair Rodrigues</span>
<span class="td tr_" style="right:843.0px">192</span>
<span class="td tr_" style="right:774.0px">183,00</span>
<span class="td tr_" style="right:521.0px">0,00</span>
<span class="td" style="left:1337.0px">31/08/2025</span>
<span class="td" style="left:1433.0px">22:46 | 06:33</span>
<span class="td" style="left:1543.0px">07:47</span>
<span class="lb lr" style="left:1602.0px">6,4</span>
<span class="lb lr" style="left:1655.0px">01:13</span>
<span class="lb lr" style="left:1733.0px">P</span>
<span class="lb li" style="left:1756.0px">C</span>
<span class="icn" style="left:1794.0px"><svg class="ied" width="18" height="17" viewBox="0 0 18 17"><path d="M0.5 1.5 Q0.5 0.5 1.5 0.5 H11 L13.5 3 V14.5 Q13.5 15.5 12.5 15.5 H1.5 Q0.5 15.5 0.5 14.5 Z" fill="#fdfdfd" stroke="#c8c8c8"/><rect x="2" y="2" width="9.5" height="12" fill="#f3f3f3"/><path d="M6.14 12.30 L3.94 9.84 L12.3 2.37 L14.5 4.83 Z" fill="#fcc52c" stroke="#ec7a14" stroke-width="0.8" stroke-linejoin="round"/><path d="M5.3 10.8 L12.6 4.2" stroke="#fff3b0" stroke-width="0.8"/><path d="M12.3 2.37 L14.5 4.83 L13.46 5.76 L11.26 3.30 Z" fill="#fbe0c8" stroke="#ec7a14" stroke-width="0.6"/><path d="M3.94 9.84 L6.14 12.30 L3.1 12.8 Z" fill="#f6c27a" stroke="#d0600a" stroke-width="0.5" stroke-linejoin="round"/><path d="M3.1 12.8 L3.6 11.1 L4.8 12.4 Z" fill="#4a2005"/></svg></span>
<span class="icn" style="left:1815.5px"><svg class="idl" width="16" height="16" viewBox="0 0 16 16"><defs><linearGradient id="rg" x1="0" y1="0" x2="0" y2="1"><stop offset="0" stop-color="#e03c20"/><stop offset="1" stop-color="#ff735e"/></linearGradient></defs><circle cx="7.6" cy="7.4" r="6.9" fill="url(#rg)" stroke="#c62e1a" stroke-width="1.2"/><circle cx="7.6" cy="7.4" r="5.8" fill="none" stroke="#ffb0a0" stroke-width="0.6" opacity="0.7"/><rect x="3.4" y="6.0" width="8.6" height="3" fill="#fff"/></svg></span>
</div>
<div class="tr st">
<span class="lb lid" style="left:5px">227127</span>
<span class="td" style="left:86.5px">Baldeio/Corte - Operacional</span>
<span class="td" style="left:418.0px">FAZ0769-Fazenda Paraíso Y5 | 8/A</span>
<span class="lb lnum" style="left:770.0px">316</span>
<span class="td" style="left:827.8px">Diego Costa Car</span>
<span class="td tr_" style="right:843.0px">334</span>
<span class="td tr_" style="right:774.0px">140,00</span>
<span class="td tr_" style="right:521.0px">0,00</span>
<span class="td" style="left:1337.0px">31/08/2025</span>
<span class="td" style="left:1433.0px">23:10 | 06:52</span>
<span class="td" style="left:1543.0px">07:42</span>
<span class="lb lr" style="left:1602.0px">6,8</span>
<span class="lb lr" style="left:1655.0px">00:51</span>
<span class="lb lr" style="left:1733.0px">P</span>
<span class="lb li" style="left:1756.0px">C</span>
<span class="icn" style="left:1794.0px"><svg class="ied" width="18" height="17" viewBox="0 0 18 17"><path d="M0.5 1.5 Q0.5 0.5 1.5 0.5 H11 L13.5 3 V14.5 Q13.5 15.5 12.5 15.5 H1.5 Q0.5 15.5 0.5 14.5 Z" fill="#fdfdfd" stroke="#c8c8c8"/><rect x="2" y="2" width="9.5" height="12" fill="#f3f3f3"/><path d="M6.14 12.30 L3.94 9.84 L12.3 2.37 L14.5 4.83 Z" fill="#fcc52c" stroke="#ec7a14" stroke-width="0.8" stroke-linejoin="round"/><path d="M5.3 10.8 L12.6 4.2" stroke="#fff3b0" stroke-width="0.8"/><path d="M12.3 2.37 L14.5 4.83 L13.46 5.76 L11.26 3.30 Z" fill="#fbe0c8" stroke="#ec7a14" stroke-width="0.6"/><path d="M3.94 9.84 L6.14 12.30 L3.1 12.8 Z" fill="#f6c27a" stroke="#d0600a" stroke-width="0.5" stroke-linejoin="round"/><path d="M3.1 12.8 L3.6 11.1 L4.8 12.4 Z" fill="#4a2005"/></svg></span>
<span class="icn" style="left:1815.5px"><svg class="idl" width="16" height="16" viewBox="0 0 16 16"><defs><linearGradient id="rg" x1="0" y1="0" x2="0" y2="1"><stop offset="0" stop-color="#e03c20"/><stop offset="1" stop-color="#ff735e"/></linearGradient></defs><circle cx="7.6" cy="7.4" r="6.9" fill="url(#rg)" stroke="#c62e1a" stroke-width="1.2"/><circle cx="7.6" cy="7.4" r="5.8" fill="none" stroke="#ffb0a0" stroke-width="0.6" opacity="0.7"/><rect x="3.4" y="6.0" width="8.6" height="3" fill="#fff"/></svg></span>
</div>
<div class="tr">
<span class="lb lid" style="left:5px">227126</span>
<span class="td" style="left:86.5px">Baldeio/Corte - Operacional</span>
<span class="td" style="left:418.0px">FAZ0769-Fazenda Paraíso Y5 | 7/B</span>
<span class="lb lnum" style="left:770.0px">315</span>
<span class="td" style="left:827.8px">Diego Almeida A</span>
<span class="td tr_" style="right:843.0px">467</span>
<span class="td tr_" style="right:774.0px">175,00</span>
<span class="td tr_" style="right:521.0px">0,00</span>
<span class="td" style="left:1337.0px">31/08/2025</span>
<span class="td" style="left:1433.0px">23:34 | 06:46</span>
<span class="td" style="left:1543.0px">07:12</span>
<span class="lb lr" style="left:1602.0px">6,0</span>
<span class="lb lr" style="left:1655.0px">01:11</span>
<span class="lb lr" style="left:1733.0px">P</span>
<span class="lb li" style="left:1756.0px">C</span>
<span class="icn" style="left:1794.0px"><svg class="ied" width="18" height="17" viewBox="0 0 18 17"><path d="M0.5 1.5 Q0.5 0.5 1.5 0.5 H11 L13.5 3 V14.5 Q13.5 15.5 12.5 15.5 H1.5 Q0.5 15.5 0.5 14.5 Z" fill="#fdfdfd" stroke="#c8c8c8"/><rect x="2" y="2" width="9.5" height="12" fill="#f3f3f3"/><path d="M6.14 12.30 L3.94 9.84 L12.3 2.37 L14.5 4.83 Z" fill="#fcc52c" stroke="#ec7a14" stroke-width="0.8" stroke-linejoin="round"/><path d="M5.3 10.8 L12.6 4.2" stroke="#fff3b0" stroke-width="0.8"/><path d="M12.3 2.37 L14.5 4.83 L13.46 5.76 L11.26 3.30 Z" fill="#fbe0c8" stroke="#ec7a14" stroke-width="0.6"/><path d="M3.94 9.84 L6.14 12.30 L3.1 12.8 Z" fill="#f6c27a" stroke="#d0600a" stroke-width="0.5" stroke-linejoin="round"/><path d="M3.1 12.8 L3.6 11.1 L4.8 12.4 Z" fill="#4a2005"/></svg></span>
<span class="icn" style="left:1815.5px"><svg class="idl" width="16" height="16" viewBox="0 0 16 16"><defs><linearGradient id="rg" x1="0" y1="0" x2="0" y2="1"><stop offset="0" stop-color="#e03c20"/><stop offset="1" stop-color="#ff735e"/></linearGradient></defs><circle cx="7.6" cy="7.4" r="6.9" fill="url(#rg)" stroke="#c62e1a" stroke-width="1.2"/><circle cx="7.6" cy="7.4" r="5.8" fill="none" stroke="#ffb0a0" stroke-width="0.6" opacity="0.7"/><rect x="3.4" y="6.0" width="8.6" height="3" fill="#fff"/></svg></span>
</div>
<div class="tr st">
<span class="lb lid" style="left:5px">227125</span>
<span class="td" style="left:86.5px">Baldeio/Corte - Operacional</span>
<span class="td" style="left:418.0px">FAZ0769-Fazenda Paraíso Y5 | 7/B</span>
<span class="lb lnum" style="left:770.0px">301</span>
<span class="td" style="left:827.8px">Gustavo Cardoso</span>
<span class="td tr_" style="right:843.0px">461</span>
<span class="td tr_" style="right:774.0px">175,00</span>
<span class="td tr_" style="right:521.0px">0,00</span>
<span class="td" style="left:1337.0px">31/08/2025</span>
<span class="td" style="left:1433.0px">23:21 | 06:53</span>
<span class="td" style="left:1543.0px">07:32</span>
<span class="lb lr" style="left:1602.0px">6,0</span>
<span class="lb lr" style="left:1655.0px">01:37</span>
<span class="lb lr" style="left:1733.0px">P</span>
<span class="lb li" style="left:1756.0px">C</span>
<span class="icn" style="left:1794.0px"><svg class="ied" width="18" height="17" viewBox="0 0 18 17"><path d="M0.5 1.5 Q0.5 0.5 1.5 0.5 H11 L13.5 3 V14.5 Q13.5 15.5 12.5 15.5 H1.5 Q0.5 15.5 0.5 14.5 Z" fill="#fdfdfd" stroke="#c8c8c8"/><rect x="2" y="2" width="9.5" height="12" fill="#f3f3f3"/><path d="M6.14 12.30 L3.94 9.84 L12.3 2.37 L14.5 4.83 Z" fill="#fcc52c" stroke="#ec7a14" stroke-width="0.8" stroke-linejoin="round"/><path d="M5.3 10.8 L12.6 4.2" stroke="#fff3b0" stroke-width="0.8"/><path d="M12.3 2.37 L14.5 4.83 L13.46 5.76 L11.26 3.30 Z" fill="#fbe0c8" stroke="#ec7a14" stroke-width="0.6"/><path d="M3.94 9.84 L6.14 12.30 L3.1 12.8 Z" fill="#f6c27a" stroke="#d0600a" stroke-width="0.5" stroke-linejoin="round"/><path d="M3.1 12.8 L3.6 11.1 L4.8 12.4 Z" fill="#4a2005"/></svg></span>
<span class="icn" style="left:1815.5px"><svg class="idl" width="16" height="16" viewBox="0 0 16 16"><defs><linearGradient id="rg" x1="0" y1="0" x2="0" y2="1"><stop offset="0" stop-color="#e03c20"/><stop offset="1" stop-color="#ff735e"/></linearGradient></defs><circle cx="7.6" cy="7.4" r="6.9" fill="url(#rg)" stroke="#c62e1a" stroke-width="1.2"/><circle cx="7.6" cy="7.4" r="5.8" fill="none" stroke="#ffb0a0" stroke-width="0.6" opacity="0.7"/><rect x="3.4" y="6.0" width="8.6" height="3" fill="#fff"/></svg></span>
</div>
<div class="tr">
<span class="lb lid" style="left:5px">227124</span>
<span class="td" style="left:86.5px">Baldeio/Corte - Operacional</span>
<span class="td" style="left:418.0px">FAZ0769-Fazenda Paraíso Y5 | 9/B</span>
<span class="lb lnum" style="left:770.0px">245</span>
<span class="td" style="left:827.8px">Otávio Ribeiro</span>
<span class="td tr_" style="right:843.0px">418</span>
<span class="td tr_" style="right:774.0px">160,00</span>
<span class="td tr_" style="right:521.0px">0,00</span>
<span class="td" style="left:1337.0px">31/08/2025</span>
<span class="td" style="left:1433.0px">23:38 | 06:30</span>
<span class="td" style="left:1543.0px">06:52</span>
<span class="lb lr" style="left:1602.0px">5,8</span>
<span class="lb lr" style="left:1655.0px">00:06</span>
<span class="lb lr" style="left:1733.0px">P</span>
<span class="lb li" style="left:1756.0px">C</span>
<span class="icn" style="left:1794.0px"><svg class="ied" width="18" height="17" viewBox="0 0 18 17"><path d="M0.5 1.5 Q0.5 0.5 1.5 0.5 H11 L13.5 3 V14.5 Q13.5 15.5 12.5 15.5 H1.5 Q0.5 15.5 0.5 14.5 Z" fill="#fdfdfd" stroke="#c8c8c8"/><rect x="2" y="2" width="9.5" height="12" fill="#f3f3f3"/><path d="M6.14 12.30 L3.94 9.84 L12.3 2.37 L14.5 4.83 Z" fill="#fcc52c" stroke="#ec7a14" stroke-width="0.8" stroke-linejoin="round"/><path d="M5.3 10.8 L12.6 4.2" stroke="#fff3b0" stroke-width="0.8"/><path d="M12.3 2.37 L14.5 4.83 L13.46 5.76 L11.26 3.30 Z" fill="#fbe0c8" stroke="#ec7a14" stroke-width="0.6"/><path d="M3.94 9.84 L6.14 12.30 L3.1 12.8 Z" fill="#f6c27a" stroke="#d0600a" stroke-width="0.5" stroke-linejoin="round"/><path d="M3.1 12.8 L3.6 11.1 L4.8 12.4 Z" fill="#4a2005"/></svg></span>
<span class="icn" style="left:1815.5px"><svg class="idl" width="16" height="16" viewBox="0 0 16 16"><defs><linearGradient id="rg" x1="0" y1="0" x2="0" y2="1"><stop offset="0" stop-color="#e03c20"/><stop offset="1" stop-color="#ff735e"/></linearGradient></defs><circle cx="7.6" cy="7.4" r="6.9" fill="url(#rg)" stroke="#c62e1a" stroke-width="1.2"/><circle cx="7.6" cy="7.4" r="5.8" fill="none" stroke="#ffb0a0" stroke-width="0.6" opacity="0.7"/><rect x="3.4" y="6.0" width="8.6" height="3" fill="#fff"/></svg></span>
</div>
<div class="tr st">
<span class="lb lid" style="left:5px">227123</span>
<span class="td" style="left:86.5px">Baldeio/Corte - Operacional</span>
<span class="td" style="left:418.0px">FAZ0769-Fazenda Paraíso Y5 | 9/B</span>
<span class="lb lnum" style="left:770.0px">245</span>
<span class="td" style="left:827.8px">Otávio Ribeiro</span>
<span class="td tr_" style="right:843.0px">418</span>
<span class="td tr_" style="right:774.0px">160,00</span>
<span class="td tr_" style="right:521.0px">0,00</span>
<span class="td" style="left:1337.0px">31/08/2025</span>
<span class="td" style="left:1433.0px">23:38 | 06:30</span>
<span class="td" style="left:1543.0px">06:52</span>
<span class="lb lr" style="left:1602.0px">5,8</span>
<span class="lb lr" style="left:1655.0px">00:06</span>
<span class="lb lr" style="left:1733.0px">P</span>
<span class="lb li" style="left:1756.0px">C</span>
<span class="icn" style="left:1794.0px"><svg class="ied" width="18" height="17" viewBox="0 0 18 17"><path d="M0.5 1.5 Q0.5 0.5 1.5 0.5 H11 L13.5 3 V14.5 Q13.5 15.5 12.5 15.5 H1.5 Q0.5 15.5 0.5 14.5 Z" fill="#fdfdfd" stroke="#c8c8c8"/><rect x="2" y="2" width="9.5" height="12" fill="#f3f3f3"/><path d="M6.14 12.30 L3.94 9.84 L12.3 2.37 L14.5 4.83 Z" fill="#fcc52c" stroke="#ec7a14" stroke-width="0.8" stroke-linejoin="round"/><path d="M5.3 10.8 L12.6 4.2" stroke="#fff3b0" stroke-width="0.8"/><path d="M12.3 2.37 L14.5 4.83 L13.46 5.76 L11.26 3.30 Z" fill="#fbe0c8" stroke="#ec7a14" stroke-width="0.6"/><path d="M3.94 9.84 L6.14 12.30 L3.1 12.8 Z" fill="#f6c27a" stroke="#d0600a" stroke-width="0.5" stroke-linejoin="round"/><path d="M3.1 12.8 L3.6 11.1 L4.8 12.4 Z" fill="#4a2005"/></svg></span>
<span class="icn" style="left:1815.5px"><svg class="idl" width="16" height="16" viewBox="0 0 16 16"><defs><linearGradient id="rg" x1="0" y1="0" x2="0" y2="1"><stop offset="0" stop-color="#e03c20"/><stop offset="1" stop-color="#ff735e"/></linearGradient></defs><circle cx="7.6" cy="7.4" r="6.9" fill="url(#rg)" stroke="#c62e1a" stroke-width="1.2"/><circle cx="7.6" cy="7.4" r="5.8" fill="none" stroke="#ffb0a0" stroke-width="0.6" opacity="0.7"/><rect x="3.4" y="6.0" width="8.6" height="3" fill="#fff"/></svg></span>
</div>
</div>
<!--/TABLE-->
</div>

</body></html>
